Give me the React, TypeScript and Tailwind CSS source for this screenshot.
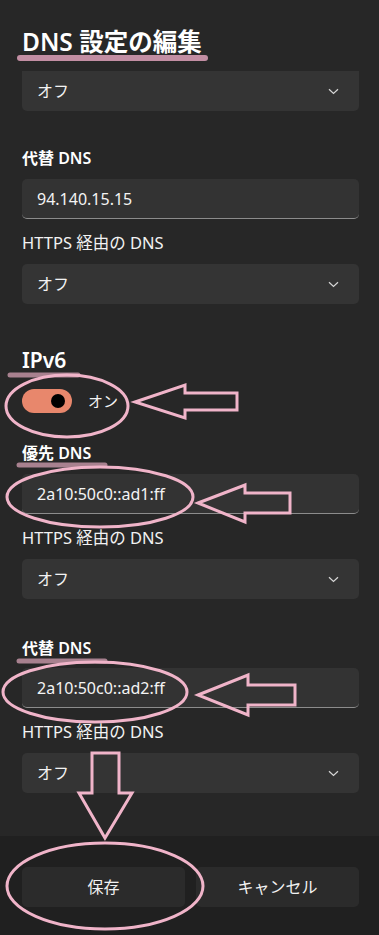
import * as React from "react";

const PINK = "#f0b4c9";

const Chevron = () => (
  <svg width="11" height="7" viewBox="0 0 11 7" fill="none">
    <path d="M1 1.2 L5.5 5.5 L10 1.2" stroke="#d6d6d6" strokeWidth="1.2" />
  </svg>
);

const Select = ({ className = "" }: { className?: string }) => (
  <div
    className={`flex h-[40px] items-center justify-between rounded-[5px] bg-[#343434] pl-[15px] pr-[20px] text-[16px] text-[#f2f2f2] ${className}`}
  >
    <span>オフ</span>
    <Chevron />
  </div>
);

const Input = ({ value, className = "" }: { value: string; className?: string }) => (
  <div
    className={`flex h-[40px] items-center rounded-[5px] border-b border-[#8c8c8c] bg-[#333333] pl-[15px] text-[16px] text-[#f4f4f4] ${className}`}
  >
    {value}
  </div>
);

const Label = ({ children, className = "" }: { children: React.ReactNode; className?: string }) => (
  <div className={`h-[20px] text-[16px] font-semibold leading-[20px] text-white ${className}`}>
    {children}
  </div>
);

const SubLabel = ({ className = "" }: { className?: string }) => (
  <div className={`h-[20px] text-[16.5px] leading-[20px] text-[#f2f2f2] ${className}`}>
    HTTPS 経由の DNS
  </div>
);

// pink annotations drawn over the screenshot
const Annotations = () => (
  <svg
    className="pointer-events-none absolute left-0 top-0"
    width="379"
    height="935"
    viewBox="0 0 379 935"
    fill="none"
  >
    <line x1="20" y1="58" x2="205" y2="58" stroke="#c28ea3" strokeWidth="6" strokeLinecap="round" />
    <line x1="10" y1="375" x2="78" y2="375" stroke="#a8818f" strokeWidth="5" strokeLinecap="round" />
    <line x1="19" y1="465" x2="105" y2="465" stroke="#a8818f" strokeWidth="5" strokeLinecap="round" />
    <line x1="19" y1="661" x2="105" y2="661" stroke="#a8818f" strokeWidth="5" strokeLinecap="round" />

    <ellipse cx="67" cy="406" rx="61" ry="31" stroke={PINK} strokeWidth="3" />
    <ellipse cx="100" cy="497" rx="93" ry="30" stroke={PINK} strokeWidth="3" />
    <ellipse cx="95" cy="692" rx="92" ry="30" stroke={PINK} strokeWidth="3" />
    <ellipse cx="105" cy="886" rx="98" ry="43" stroke={PINK} strokeWidth="3" />

    <polygon
      points="135,402 185,385 185,393 237,393 237,410 185,410 185,418"
      stroke={PINK}
      strokeWidth="3"
    />
    <polygon
      points="198,503 245,485 245,493 290,493 290,513 245,513 245,522"
      stroke={PINK}
      strokeWidth="3"
    />
    <polygon
      points="198,695 248,675 248,685 295,685 295,705 248,705 248,715"
      stroke={PINK}
      strokeWidth="3"
    />
    <polygon
      points="92,753 119,753 119,793 132,793 105,838 79,793 92,793"
      stroke={PINK}
      strokeWidth="3"
    />
  </svg>
);

export default function App() {
  return (
    <div className="relative h-[935px] w-[379px] overflow-hidden bg-[#272727] font-['Noto_Sans','Noto_Sans_CJK_JP',sans-serif]">
      <div className="h-[836px] pl-[22px] pr-[20px]">
        <h1 className="pt-[26px] text-[24.5px] font-semibold leading-[32px] text-white">DNS 設定の編集</h1>
        <Select className="mt-[13px] h-[37px] rounded-t-none" />

        <Label className="mt-[37px]">代替 DNS</Label>
        <Input className="mt-[11px]" value="94.140.15.15" />
        <SubLabel className="mt-[14px]" />
        <Select className="mt-[11px]" />

        <h2 className="mt-[42px] text-[21px] font-semibold leading-[28px] text-white">IPv6</h2>
        <div className="mt-[15px] flex h-[24px] items-center gap-[16px]">
          <div className="flex h-[24px] w-[50px] items-center justify-end rounded-full bg-[#e8876c] pr-[7px]">
            <div className="h-[14px] w-[14px] rounded-full bg-black" />
          </div>
          <span className="text-[15px] text-[#f2f2f2]">オン</span>
        </div>

        <Label className="mt-[30px]">優先 DNS</Label>
        <Input className="mt-[11px]" value="2a10:50c0::ad1:ff" />
        <SubLabel className="mt-[14px]" />
        <Select className="mt-[11px]" />

        <Label className="mt-[39px]">代替 DNS</Label>
        <Input className="mt-[10px]" value="2a10:50c0::ad2:ff" />
        <SubLabel className="mt-[14px]" />
        <Select className="mt-[11px]" />
      </div>

      <div className="flex h-[99px] gap-[11px] bg-[#202020] pl-[22px] pr-[20px] pt-[31px]">
        <button className="flex h-[40px] flex-1 items-center justify-center rounded-[5px] bg-[#2b2b2b] text-[16px] text-[#f2f2f2]">
          保存
        </button>
        <button className="flex h-[40px] flex-1 items-center justify-center rounded-[5px] bg-[#2b2b2b] text-[16px] text-[#f2f2f2]">
          キャンセル
        </button>
      </div>

      <Annotations />
    </div>
  );
}
